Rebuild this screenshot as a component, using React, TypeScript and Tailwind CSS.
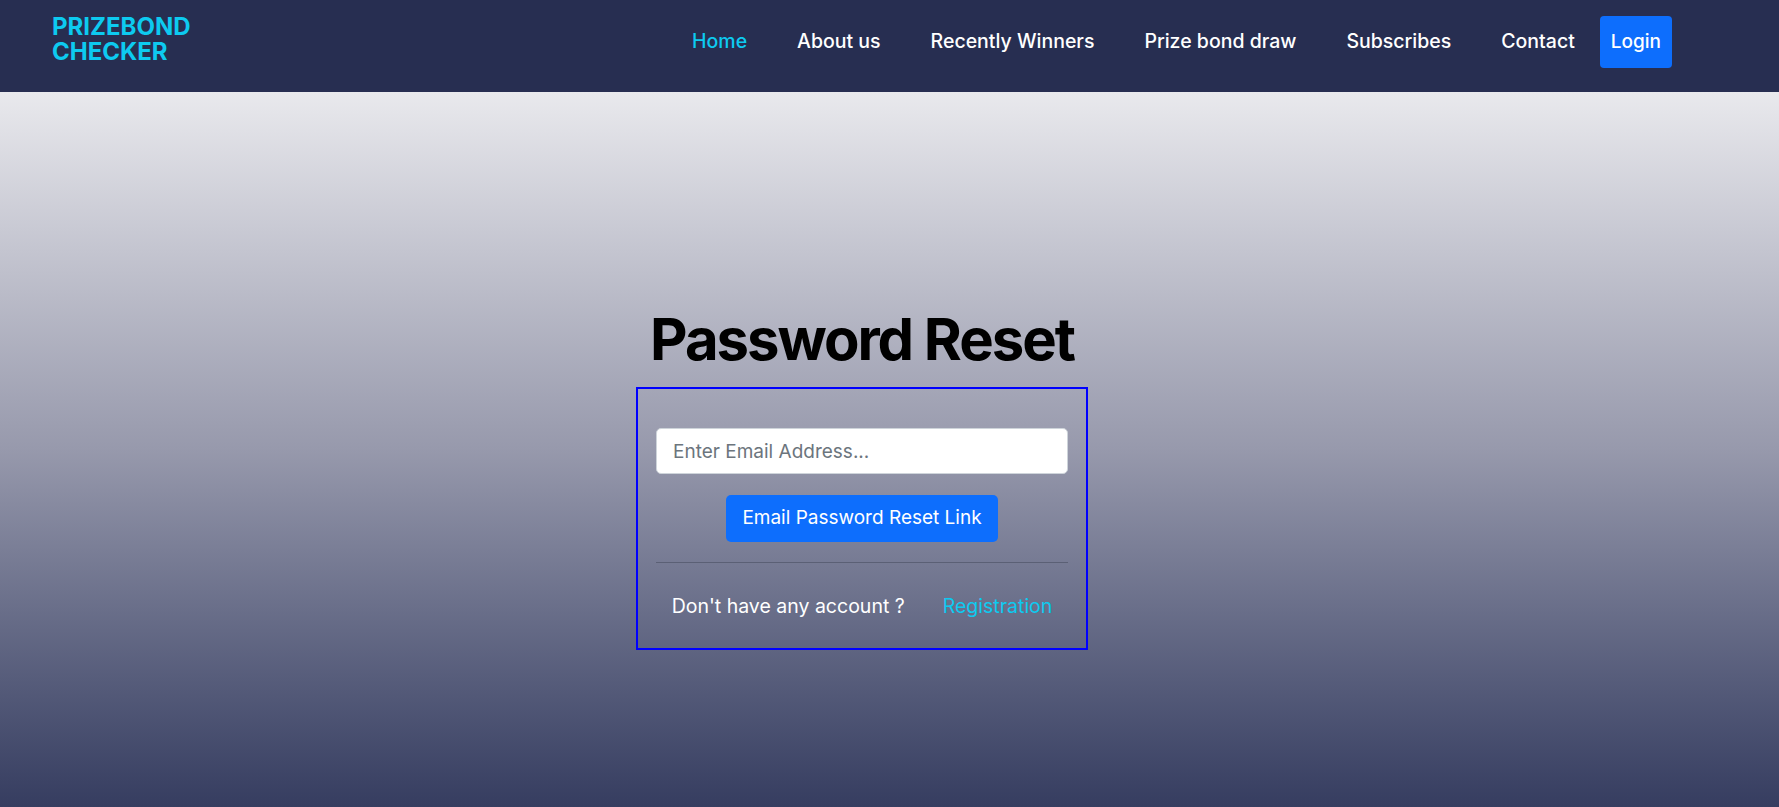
import React, { useState } from 'react';

const NAV_LINKS = ['Home', 'About us', 'Recently Winners', 'Prize bond draw', 'Subscribes', 'Contact'];

const App: React.FC = () => {
  const [email, setEmail] = useState('');

  return (
    <div className="min-h-screen font-['Inter','Noto_Sans',sans-serif]">
      <header className="flex h-[92px] items-start justify-between bg-[#272e51] pl-[52px] pr-[107px]">
        <a href="#" className="mt-[14px] text-[24px] font-bold uppercase leading-[25px] text-[#0dcaf0]">
          Prizebond
          <br />
          Checker
        </a>
        <nav className="mt-[16px] flex h-[52px] items-center">
          {NAV_LINKS.map((link, idx) => (
            <a
              key={link}
              href="#"
              className={`px-[25px] text-[19.5px] font-medium ${idx === 0 ? 'text-[#0dcaf0]' : 'text-white'}`}
            >
              {link}
            </a>
          ))}
          <button className="h-[52px] rounded-[4px] bg-[#0d6efd] px-[11px] text-[19px] font-medium text-white">
            Login
          </button>
        </nav>
      </header>

      <main className="flex min-h-[715px] flex-col items-center bg-linear-to-b from-[#e9e9ed] via-[#9799ac] to-[#363d60] pr-[55px] pt-[218px]">
        <h1 className="text-[58px] font-bold leading-none tracking-[-0.035em] text-black">Password Reset</h1>

        {/* reset form */}
        <div className="mt-[19px] w-[452px] border-2 border-[#0000ff] px-[18px] pb-[27px] pt-[39px]">
          <input
            type="email"
            value={email}
            onChange={e => setEmail(e.target.value)}
            placeholder="Enter Email Address..."
            className="block h-[46px] w-full rounded-[5px] border border-[#ced4da] bg-white px-4 text-[19px] text-[#212529] outline-none placeholder:text-[#6c757d]"
          />
          <div className="mt-[21px] flex justify-center">
            <button className="h-[47px] rounded-[5px] bg-[#0d6efd] px-4 text-[19px] text-white">
              Email Password Reset Link
            </button>
          </div>
          <hr className="mt-[20px] border-t border-[#5b6075]" />
          <div className="mt-[28px] flex items-center justify-center gap-[38px] text-[19.5px] leading-[30px]">
            <span className="text-white">Don't have any account ?</span>
            <a href="#" className="text-[#0dcaf0]">Registration</a>
          </div>
        </div>
      </main>
    </div>
  );
};

export default App;
